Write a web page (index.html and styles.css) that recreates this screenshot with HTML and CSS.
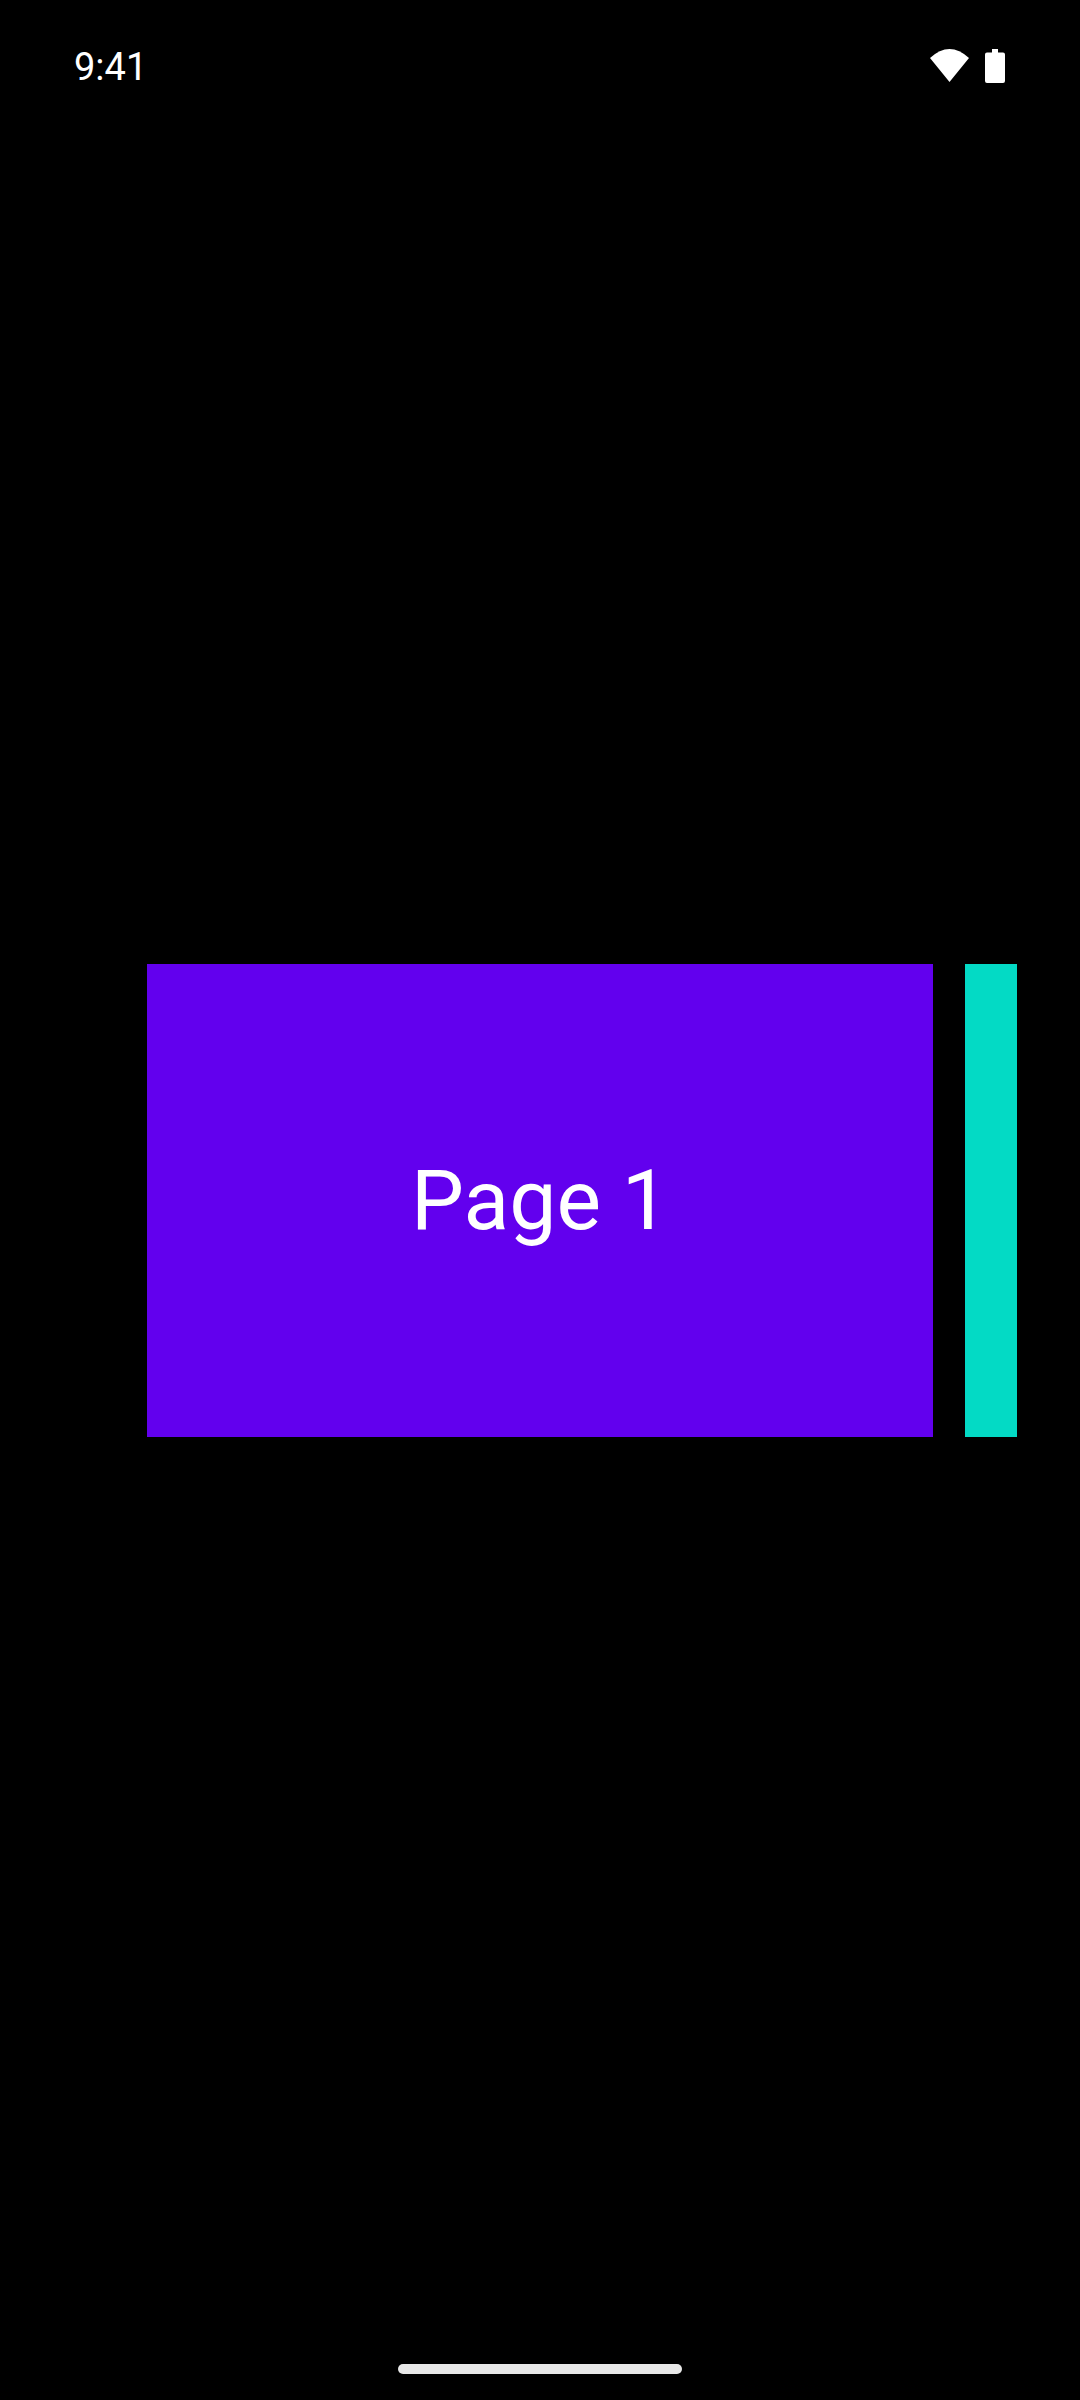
FILE: index.html
```html
<!DOCTYPE html>
<html lang="en">

<head>
    <meta charset="UTF-8">
    <meta name="viewport" content="width=device-width, initial-scale=1.0">
    <title>Pager</title>
    <link rel="stylesheet" href="styles.css">
</head>

<body>
    <div class="screen">
        <header class="status-bar">
            <span class="clock">9:41</span>
            <div class="status-icons">
                <svg class="icon-wifi" width="39" height="33" viewBox="0 0 39 33">
                    <path d="M0 9Q19.500-9 39 9L19.500 33Z" fill="#fff" />
                </svg>
                <svg class="icon-battery" width="20" height="34" viewBox="0 0 20 34">
                    <path d="M7 0H13V3.500H18Q20 3.500 20 5.500V32Q20 34 18 34H2Q0 34 0 32V5.500Q0 3.500 2 3.500H7Z" fill="#fff" />
                </svg>
            </div>
        </header>

        <main class="pager">
            <div class="page page-current">Page 1</div>
            <div class="page page-next"></div>
        </main>

        <footer class="nav-bar">
            <div class="home-handle"></div>
        </footer>
    </div>
</body>

</html>
```

FILE: styles.css
```css
body {
    margin: 0;
    background: #000;
    color: #fff;
    font-family: Roboto, "Liberation Sans", sans-serif;
}

.screen {
    height: 2400px;
    display: grid;
    grid-template-rows: 1fr 473px 1fr;
    overflow: hidden;
}

.status-bar {
    display: flex;
    justify-content: space-between;
    align-items: flex-start;
    padding: 47px 75px 0 74px;
}

.clock {
    font-size: 38px;
    line-height: 38px;
    margin-top: 1px;
}

.status-icons {
    display: flex;
    align-items: flex-start;
    gap: 16px;
    margin-top: 2px;
}

.icon-wifi,
.icon-battery {
    display: block;
}

.pager {
    display: flex;
    gap: 32px;
    margin: 0 63px 0 147px;
    overflow: hidden;
}

.page {
    flex: none;
    width: 786px;
    display: flex;
    align-items: center;
    justify-content: center;
}

.page-current {
    background: #6200ee;
    font-size: 84px;
}

.page-next {
    background: #03dac5;
}

.nav-bar {
    display: flex;
    align-items: flex-end;
    justify-content: center;
    padding-bottom: 26px;
}

.home-handle {
    width: 284px;
    height: 10px;
    border-radius: 5px;
    background: #e8e8e8;
}
```
